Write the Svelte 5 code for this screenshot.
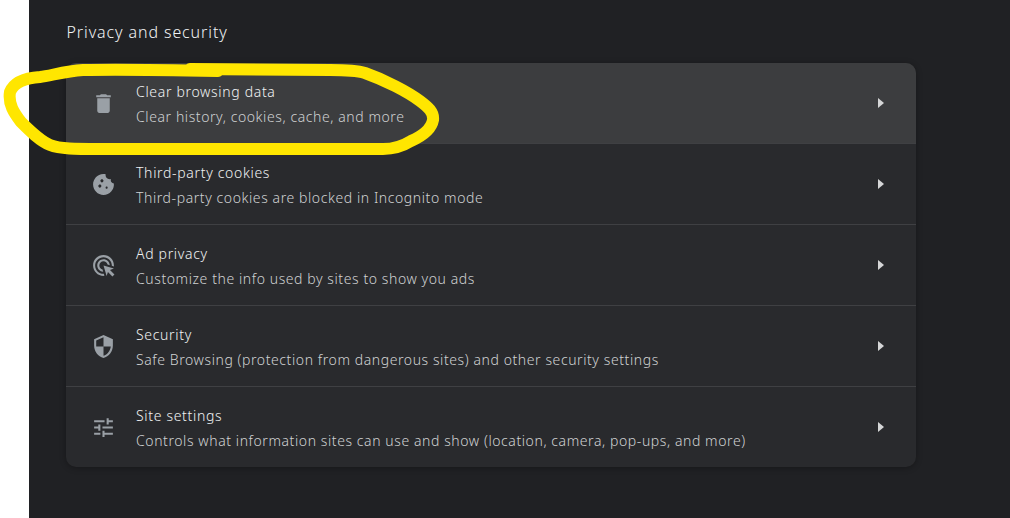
<script>
  const rows = [
    { title: 'Clear browsing data', sub: 'Clear history, cookies, cache, and more', active: true,
      icon: 'M6 19c0 1.1.9 2 2 2h8c1.1 0 2-.9 2-2V7H6v12zM19 4h-3.5l-1-1h-5l-1 1H5v2h14V4z' },
    { title: 'Third-party cookies', sub: 'Third-party cookies are blocked in Incognito mode',
      icon: 'M21.95 10.99c-1.79-.03-3.7-1.95-2.68-4.22-2.98 1-5.77-1.59-5.19-4.56C6.95.71 2 6.58 2 12c0 5.52 4.48 10 10 10 5.89 0 10.54-5.08 9.95-11.01zM8.5 15c-.83 0-1.5-.67-1.5-1.5S7.67 12 8.5 12s1.5.67 1.5 1.5S9.33 15 8.5 15zm2-5C9.67 10 9 9.33 9 8.5S9.67 7 10.5 7s1.5.67 1.5 1.5-.67 1.5-1.5 1.5zm4.5 6c-.55 0-1-.45-1-1s.45-1 1-1 1 .45 1 1-.45 1-1 1z' },
    { title: 'Ad privacy', sub: 'Customize the info used by sites to show you ads',
      icon: 'M11.71,17.99C8.53,17.84,6,15.22,6,12c0-3.31,2.69-6,6-6c3.22,0,5.84,2.53,5.99,5.71l-2.1-0.63C15.48,9.31,13.89,8,12,8c-2.21,0-4,1.79-4,4c0,1.89,1.31,3.48,3.08,3.89L11.71,17.99z M22,12c0,0.3-0.01,0.6-0.04,0.9l-1.97-0.59C20,12.21,20,12.1,20,12c0-4.42-3.58-8-8-8s-8,3.58-8,8s3.58,8,8,8c0.1,0,0.21,0,0.31-0.01l0.59,1.97C12.6,21.99,12.3,22,12,22C6.48,22,2,17.52,2,12C2,6.48,6.48,2,12,2S22,6.48,22,12z M18.23,16.26L22,15l-10-3l3,10l1.26-3.77l4.27,4.27l1.98-1.98L18.23,16.26z' },
    { title: 'Security', sub: 'Safe Browsing (protection from dangerous sites) and other security settings',
      icon: 'M12 1L3 5v6c0 5.55 3.84 10.74 9 12 5.16-1.26 9-6.45 9-12V5l-9-4zm0 10.99h7c-.53 4.12-3.28 7.79-7 8.94V12H5V6.3l7-3.11v8.8z' },
    { title: 'Site settings', sub: 'Controls what information sites can use and show (location, camera, pop-ups, and more)',
      icon: 'M3 17v2h6v-2H3zM3 5v2h10V5H3zm10 16v-2h8v-2h-8v-2h-2v6h2zM7 9v2H3v2h4v2h2V9H7zm14 4v-2H11v2h10zm-6-4h2V7h4V5h-4V3h-2v6z' }
  ];
</script>

<div class="page">
  <div class="strip"></div>
  <main class="content">
    <h2 class="heading">Privacy and security</h2>
    <section class="card">
      {#each rows as row}
        <div class="row" class:active={row.active}>
          <svg class="icon" viewBox="0 0 24 24" aria-hidden="true"><path d={row.icon} /></svg>
          <div class="text">
            <div class="title">{row.title}</div>
            <div class="sub">{row.sub}</div>
          </div>
          <span class="arrow"></span>
        </div>
      {/each}
    </section>
  </main>
  <svg class="scribble" viewBox="0 0 1010 518" aria-hidden="true">
    <path d="M218 71 C170 70 120 69 83 70 C65 71 50 76 40 77 C24 78 14 82 10 92 C8 104 14 113 21 122 C30 131 40 141 50 145 C60 149 75 149 100 149 L383 149 C395 149 403 146 411 141 C420 137 431 131 433 120 C434 112 428 107 420 101 C408 92 385 80 365 73 C355 70 340 70 330 70 L190 69" />
  </svg>
</div>

<style>
  :global(body) {
    margin: 0;
    background: #fff;
  }
  .page {
    position: relative;
    display: flex;
    width: 1010px;
    height: 518px;
    overflow: hidden;
    font-family: "Noto Sans", sans-serif;
  }
  .strip {
    flex: 0 0 29px;
    background: #fff;
  }
  .content {
    flex: 1;
    background: #202124;
    padding: 0 94px 0 37px;
  }
  .heading {
    margin: 0;
    height: 63px;
    line-height: 64px;
    font-size: 16px;
    font-weight: 300;
    letter-spacing: 0.9px;
    color: #f1f3f4;
    padding-left: 0.5px;
  }
  .card {
    background: #292a2d;
    border-radius: 10px;
    overflow: hidden;
    box-shadow: 0 1px 6px rgba(0, 0, 0, 0.3);
  }
  .row {
    display: flex;
    align-items: center;
    height: 80px;
    padding-left: 25px;
    border-top: 1px solid #3f4043;
  }
  .row:first-child {
    border-top: 0;
  }
  .row.active {
    background: #3c3d3f;
  }
  .icon {
    flex: 0 0 25px;
    width: 25px;
    height: 25px;
    fill: #9aa0a6;
  }
  .text {
    flex: 1;
    margin-left: 20px;
    padding-top: 2px;
    letter-spacing: 0.585px;
    font-size: 14px;
    font-weight: 300;
    line-height: 25px;
  }
  .title {
    color: #f1f3f4;
    letter-spacing: 0.68px;
  }
  .sub {
    color: #d0d2d3;
  }
  .arrow {
    width: 0;
    height: 0;
    margin-right: 32px;
    border-left: 6px solid #d5d6d7;
    border-top: 5.5px solid transparent;
    border-bottom: 5.5px solid transparent;
  }
  .scribble {
    position: absolute;
    inset: 0;
    width: 1010px;
    height: 518px;
    fill: none;
    stroke: #ffe600;
    stroke-width: 12;
    stroke-linecap: round;
    stroke-linejoin: round;
    pointer-events: none;
  }
</style>
